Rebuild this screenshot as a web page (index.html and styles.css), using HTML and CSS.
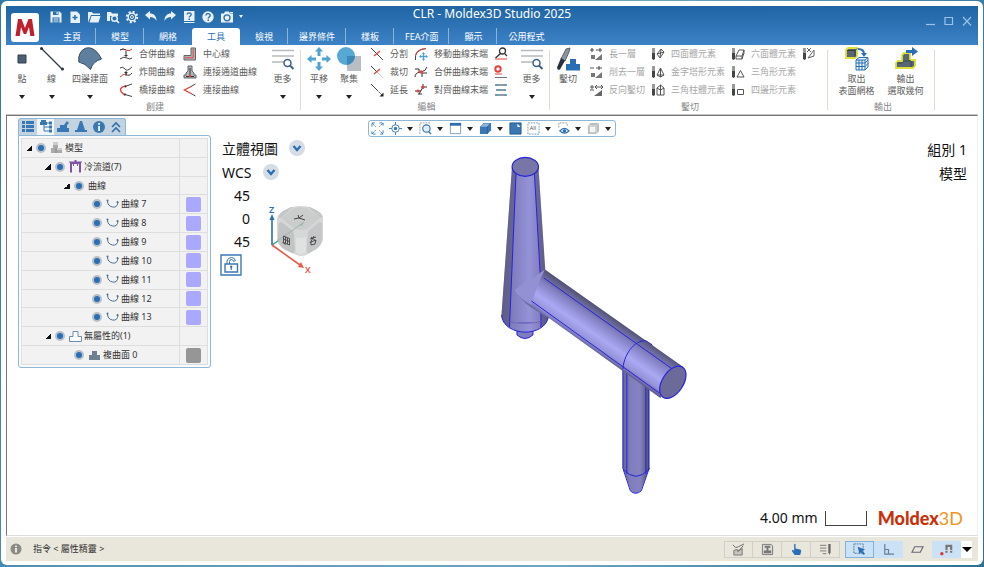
FILE: index.html
```html
<!DOCTYPE html>
<html lang="zh-Hant">
<head>
<meta charset="utf-8">
<title>CLR - Moldex3D Studio 2025</title>
<link rel="stylesheet" href="styles.css">
</head>
<body>
<div class="window">

<header class="titlebar">
  <button class="logo" aria-label="Moldex3D"><svg viewBox="0 0 28 29" width="28" height="29"><path d="M4.500 23L7 6h3.500L14 15l3.500-9H21l2.500 17h-4.200l-1.300-9-2.800 7h-2.400L10 14l-1.300 9z" fill="#c0202c"/></svg></button>
  <div class="titlemain">
    <div class="titlerow">
      <div class="quick">
        <button aria-label="儲存"><svg viewBox="0 0 14 14"><path d="M1.500 1.500h9l2 2v9h-11z" fill="#e8f1fa"/><path d="M4 1.500h5.500V5H4zM3.500 7.500h7v5h-7z" fill="#2b6fae"/><path d="M7.500 2h1.200v2.200H7.500zM4.500 8.500h5v1h-5zM4.500 10.500h5v1h-5z" fill="#e8f1fa"/></svg></button>
        <button aria-label="新增"><svg viewBox="0 0 14 14"><path d="M2.500 1.500h6.500l3 3v8.500h-9.500z" fill="#e8f1fa"/><path d="M7 5v5M4.500 7.500h5" stroke="#2b6fae" stroke-width="1.500"/></svg></button>
        <button aria-label="開啟"><svg viewBox="0 0 14 14"><path d="M1 12.500V2h4l1 1.500h7V5H4z" fill="#e8f1fa"/><path d="M4.500 6H13.500l-2 6.500H2.500z" fill="#e8f1fa"/></svg></button>
        <button aria-label="瀏覽"><svg viewBox="0 0 14 14"><path d="M1 11V2h4l1 1.500h6V6H4v5z" fill="#e8f1fa"/><circle cx="8.500" cy="8.500" r="2.800" fill="#2b6fae" stroke="#e8f1fa" stroke-width="1.400"/><path d="M10.500 10.500l2.500 2.500" stroke="#e8f1fa" stroke-width="1.600"/></svg></button>
        <button aria-label="設定"><svg viewBox="0 0 14 14"><circle cx="7" cy="7" r="5.200" fill="none" stroke="#e8f1fa" stroke-width="2" stroke-dasharray="2.040 2.040"/><circle cx="7" cy="7" r="3.800" fill="none" stroke="#e8f1fa" stroke-width="1.400"/><circle cx="7" cy="7" r="1.500" fill="none" stroke="#e8f1fa"/></svg></button>
        <button aria-label="復原"><svg viewBox="0 0 14 14"><path d="M1 5l5-4v2.500c4 0 6.500 2.500 6.500 7.500C11 8 9 7 6 7v2.500z" fill="#e8f1fa"/></svg></button>
        <button aria-label="重做"><svg viewBox="0 0 14 14"><path d="M13 5L8 1v2.500C4 3.500 1.500 6 1.500 11 3 8 5 7 8 7v2.500z" fill="#e8f1fa"/></svg></button>
        <button aria-label="說明文件"><svg viewBox="0 0 14 14"><path d="M2 1h10.500v10H2zM2 12h10.500v1H2z" fill="#e8f1fa"/><path d="M5.200 4.600c0-2.400 4-2.400 4 0 0 1.400-2 1.400-2 3" fill="none" stroke="#2b6fae" stroke-width="1.300"/><path d="M6.500 8.500H8V10H6.500z" fill="#2b6fae"/></svg></button>
        <button aria-label="說明"><svg viewBox="0 0 14 14"><circle cx="7" cy="7" r="5.700" fill="#e8f1fa"/><path d="M5 5.600c0-2.800 4.200-2.600 4.200 0C9.200 7 7.200 7 7.200 8.600" fill="none" stroke="#2b6fae" stroke-width="1.400"/><path d="M6.500 9.500H8V11H6.500z" fill="#2b6fae"/></svg></button>
        <button aria-label="擷取畫面"><svg viewBox="0 0 14 14"><path d="M1 3.500h3l1-2h4l1 2h3v9H1z" fill="#e8f1fa"/><circle cx="7" cy="7.800" r="3" fill="none" stroke="#2b6fae" stroke-width="1.300"/><path d="M10 2.500h3" stroke="#e8f1fa"/></svg></button>
        <button class="tiny" aria-label="更多命令"><i class="caret light"></i></button>
      </div>
      <h1>CLR - Moldex3D Studio 2025</h1>
      <div class="winbtns">
        <button aria-label="最小化"><svg viewBox="0 0 10 10"><path d="M0 8.500h9" stroke="#9cc3e6" stroke-width="1.200"/></svg></button>
        <button aria-label="最大化"><svg viewBox="0 0 10 10"><path d="M1 1.500h7.500v7H1z" fill="none" stroke="#9cc3e6" stroke-width="1.200"/></svg></button>
        <button aria-label="關閉"><svg viewBox="0 0 10 10"><path d="M1 1l8 8.500M9 1L1 9.500" stroke="#9cc3e6" stroke-width="1.200"/></svg></button>
      </div>
    </div>
    <nav class="tabs">
      <button>主頁</button><button>模型</button><button class="plain">網格</button><button class="plain active">工具</button><button>檢視</button><button>邊界條件</button><button>樣板</button><button>FEA介面</button><button>顯示</button><button class="plain">公用程式</button>
    </nav>
  </div>
</header>

<section class="ribbon">
  <div class="group create">
    <div class="tools">
      <div class="bigs">
        <button class="big"><svg viewBox="0 0 24 24"><path d="M8 8h8v8H8z" fill="#4d5f73" stroke="#333f4c"/></svg><span>點</span><i class="caret"></i></button>
        <button class="big wide"><svg viewBox="0 0 24 24"><path d="M1.500 1.500l21 21" stroke="#2f3c49" stroke-width="1.300"/><circle cx="1.500" cy="1.500" r="1.500" fill="#26323e"/><circle cx="22.500" cy="22" r="1.500" fill="#26323e"/></svg><span>線</span><i class="caret"></i></button>
        <button class="big quad"><svg viewBox="0 0 24 24"><path d="M.8 10Q3 1 10.500.7 18 1 23.500 12 15 14 12.500 22.500 7 16 .8 15z" fill="#5f7f9e" stroke="#34495e"/></svg><span>四邊建面</span><i class="caret"></i></button>
      </div>
      <div class="col">
        <button class="item"><svg viewBox="0 0 14 14"><path d="M1 3q3-2 6 0t6-1" stroke="#e8403a"/><path d="M1 3q3-2 6 0M1 12q4-3 7-1t5 0" stroke="#444"/><path d="M7 4v5" stroke="#333"/><path d="M5 8h4L7 10z" fill="#333" stroke="none"/></svg>合併曲線</button>
        <button class="item"><svg viewBox="0 0 14 14"><path d="M1 3q3-2 5 1 2 3 7-2" stroke="#444"/><path d="M1 12q3-3 6-3" stroke="#e8403a"/><path d="M7 9q3 3 6-1M7 6v5" stroke="#333"/><path d="M5 7h4L7 9z" fill="#333" stroke="none"/></svg>炸開曲線</button>
        <button class="item"><svg viewBox="0 0 14 14"><path d="M7 3Q1 4 1.500 7T6 12" stroke="#e8403a" stroke-width="1.400"/><path d="M6 3.500L13 1M6 11.500l7 2" stroke="#444"/><circle cx="6.500" cy="3.500" r="1" fill="#333"/><circle cx="6" cy="11.500" r="1" fill="#333"/></svg>橋接曲線</button>
      </div>
      <div class="col">
        <button class="item"><svg viewBox="0 0 14 14"><path d="M8 1h4.500v12H1V8.500h7z" fill="#b3b6b9" stroke="#60666c"/><path d="M10.200 2v8.800H2" stroke="#e8403a"/></svg>中心線</button>
        <button class="item"><svg viewBox="0 0 14 14"><path d="M5 1h4v5l2 2v2h2v3H1v-3h2V8l2-2z" fill="#b3b6b9" stroke="#60666c"/><path d="M7 3v8M3 11.500h8" stroke="#333"/><circle cx="7" cy="11" r="1.200" fill="#e8403a" stroke="none"/></svg>連接通道曲線</button>
        <button class="item"><svg viewBox="0 0 14 14"><path d="M8 3.500L1.500 7 8 10.500" stroke="#e8403a" stroke-width="1.400"/><path d="M8 3.500L12.500 1M8 10.500l4.500 2.500" stroke="#444"/></svg>連接曲線</button>
      </div>
      <button class="big wide more"><svg viewBox="0 0 24 24"><path d="M1 3.500h22M1 9h22M1 15h12" stroke="#b5babf" stroke-width="1.500"/><circle cx="16.500" cy="16" r="3.500" fill="#fff" stroke="#3f5f80" stroke-width="1.500"/><path d="M19 18.500l3.500 3.500" stroke="#3f5f80" stroke-width="2"/></svg><span>更多</span><i class="caret"></i></button>
    </div>
    <h2>創建</h2>
  </div>

  <div class="group edit">
    <div class="tools">
      <div class="bigs">
        <button class="big"><svg viewBox="0 0 24 24"><path d="M12 0l4 4.500h-2.500V9h-3V4.500H8zM12 24l4-4.500h-2.500V15h-3v4.500H8zM0 12l4.500-4v2.500H9v3H4.500V16zM24 12l-4.500-4v2.500H15v3h4.500V16z" fill="#4fa3d1"/></svg><span>平移</span><i class="caret"></i></button>
        <button class="big"><svg viewBox="0 0 24 24"><path d="M10 9h14v15H10z" fill="#b9bec4"/><circle cx="9" cy="9" r="9" fill="#57a9d5"/><path d="M10 9h8a9 9 0 0 1-8 9z" fill="#3c88ba"/></svg><span>聚集</span><i class="caret"></i></button>
      </div>
      <div class="col">
        <button class="item"><svg viewBox="0 0 14 14"><path d="M1 1l12 12" stroke="#444"/><path d="M4 9l6-5" stroke="#e8403a" stroke-width="1.300"/></svg>分割</button>
        <button class="item"><svg viewBox="0 0 14 14"><path d="M1 1l6 6" stroke="#444"/><path d="M7 7l6 6" stroke="#ccc"/><path d="M4 9l6-5" stroke="#e8403a" stroke-width="1.300"/></svg>裁切</button>
        <button class="item"><svg viewBox="0 0 14 14"><path d="M1 1l6 6" stroke="#444"/><path d="M7 7l5 5" stroke="#444" stroke-dasharray="2 1"/><path d="M13.500 13.500h-4l4-4z" fill="#222" stroke="none"/></svg>延長</button>
      </div>
      <div class="col">
        <button class="item"><svg viewBox="0 0 14 14"><path d="M1.500 13Q0 3 12 1.500" stroke="#444"/><path d="M1.500 8Q3 2 12 1.500" stroke="#e8403a"/><path d="M9.500 6v7M6 9.500h7" stroke="#4fa3d1" stroke-width="1.300"/><path d="M8 7l1.500-2L11 7zM8 12l1.500 2 1.500-2zM7 8l-2 1.500L7 11zM12 8l2 1.500-2 1.500z" fill="#4fa3d1" stroke="none"/></svg>移動曲線末端</button>
        <button class="item"><svg viewBox="0 0 14 14"><path d="M1 12q0-4 5-5M13 2q-1 4-6 5M1 4h4v3M8 12V8h5" stroke="#333"/><circle cx="7" cy="7" r="1.700" fill="#e8403a" stroke="none"/></svg>合併曲線末端</button>
        <button class="item"><svg viewBox="0 0 14 14"><path d="M1 8h6M7 4h6M4 11h4M9 4l-4 7M9 1v5" stroke="#333"/><circle cx="9" cy="4" r="1.500" fill="#e8403a" stroke="none"/><circle cx="4" cy="8" r="1.500" fill="#e8403a" stroke="none"/></svg>對齊曲線末端</button>
      </div>
      <div class="col">
        <button class="item" aria-label="檢查曲線"><svg viewBox="0 0 14 14"><path d="M1 12h12" stroke="#e8403a"/><circle cx="8.500" cy="4" r="3" stroke="#333" stroke-width="1.300"/><path d="M6.500 6.500L1.500 11M11 7l2 2" stroke="#333" stroke-width="1.300"/></svg></button>
        <button class="item" aria-label="移除曲線"><svg viewBox="0 0 14 14"><circle cx="4" cy="4" r="2.700" stroke="#e8403a" stroke-width="2"/><path d="M1 9h7" stroke="#e8403a"/><path d="M1 12.500h12" stroke="#777"/></svg></button>
        <button class="item" aria-label="排列曲線"><svg viewBox="0 0 14 14"><path d="M1 2h12M2 7h10M1 12h12" stroke="#333"/><path d="M3 1v2M11 1v2M5 6v2M11 6v2M3 11v2M11 11v2" stroke="#4fa3d1" stroke-width="2"/></svg></button>
      </div>
      <button class="big wide more"><svg viewBox="0 0 24 24"><path d="M1 3.500h22M1 9h22M1 15h12" stroke="#b5babf" stroke-width="1.500"/><circle cx="16.500" cy="16" r="3.500" fill="#fff" stroke="#3f5f80" stroke-width="1.500"/><path d="M19 18.500l3.500 3.500" stroke="#3f5f80" stroke-width="2"/></svg><span>更多</span><i class="caret"></i></button>
    </div>
    <h2>編輯</h2>
  </div>

  <div class="group chisel">
    <div class="tools">
      <div class="bigs">
        <button class="big"><svg viewBox="0 0 24 24"><path d="M10 2l4-1-1 4-4 9-4-2z" fill="#8c959d" stroke="#59636c"/><path d="M5 11l4 2.500-5 9q-3 1-3-2z" fill="#26323e"/><path d="M10 23.500V17h4v-5h6v5h4v6.500z" fill="#2a6fb5"/></svg><span>鑿切</span></button>
      </div>
      <div class="col off">
        <button class="item"><svg viewBox="0 0 14 14"><path d="M1 3h4M3 1v4M7 3h6M11 1v4" stroke="#555" stroke-width="1.200"/><path d="M6 13l7-6v6zM2 8h4v4H2z" fill="#777" stroke="none"/></svg>長一層</button>
        <button class="item"><svg viewBox="0 0 14 14"><path d="M1 3h4M7 3h6M10 1v4" stroke="#555" stroke-width="1.200"/><path d="M6 13l7-6v6zM2 8h4v4H2z" fill="#777" stroke="none"/></svg>削去一層</button>
        <button class="item"><svg viewBox="0 0 14 14"><path d="M1 4h4M3 2v4M1 7h4M7 4h6M8 2l-2 2 2 2M12 2l2 2-2 2" stroke="#555"/><path d="M5 13l8-6v6z" fill="#666" stroke="none"/></svg>反向鑿切</button>
      </div>
      <div class="col off">
        <button class="item"><svg viewBox="0 0 14 14"><path d="M1 1h3v5H1z" fill="#999" stroke="none"/><path d="M1 6h3v6l-1.500 1L1 12z" fill="#444" stroke="none"/><path d="M6 7l4-5 3 3-4 6zM6 7l7-2M9 11l1-9" stroke="#555"/></svg>四面體元素</button>
        <button class="item"><svg viewBox="0 0 14 14"><path d="M1 1h3v5H1z" fill="#999" stroke="none"/><path d="M1 6h3v6l-1.500 1L1 12z" fill="#444" stroke="none"/><path d="M9.500 3L6 10l3.500 2 3.500-2zM9.500 3v9M6 10h7" stroke="#555"/></svg>金字塔形元素</button>
        <button class="item"><svg viewBox="0 0 14 14"><path d="M1 1h3v5H1z" fill="#999" stroke="none"/><path d="M1 6h3v6l-1.500 1L1 12z" fill="#444" stroke="none"/><path d="M6 5l3.500-3L13 5v7H6zM9.500 2v10M6 5l3.500 2L13 5" stroke="#555"/></svg>三角柱體元素</button>
      </div>
      <div class="col off">
        <button class="item"><svg viewBox="0 0 14 14"><path d="M1 1h3v5H1z" fill="#999" stroke="none"/><path d="M1 6h3v6l-1.500 1L1 12z" fill="#444" stroke="none"/><path d="M5 9l3-6h5l-2 6zM5 9v3h6l2-6V3M11 9v3" stroke="#555"/></svg>六面體元素</button>
        <button class="item"><svg viewBox="0 0 14 14"><path d="M1 1h3v5H1z" fill="#999" stroke="none"/><path d="M1 6h3v6l-1.500 1L1 12z" fill="#444" stroke="none"/><path d="M9.500 5.500L6 12h7z" stroke="#555"/></svg>三角形元素</button>
        <button class="item"><svg viewBox="0 0 14 14"><path d="M1 1h3v5H1z" fill="#999" stroke="none"/><path d="M1 6h3v6l-1.500 1L1 12z" fill="#444" stroke="none"/><path d="M6.500 6.500h6v5h-6z" stroke="#555"/></svg>四邊形元素</button>
      </div>
      <div class="col off">
        <button class="item" aria-label="刪除元素"><svg viewBox="0 0 14 14"><path d="M1 1h3v5H1z" fill="#999" stroke="none"/><path d="M1 6h3v6l-1.500 1L1 12z" fill="#444" stroke="none"/><path d="M5 1l4 4M9 1L5 5M6 11l6-8v6z" stroke="#666"/></svg></button>
      </div>
    </div>
    <h2>鑿切</h2>
  </div>

  <div class="group export">
    <div class="tools">
      <button class="big"><svg viewBox="0 0 24 24"><path d="M1 3l2-2h9v8l-2 2H1z" fill="#596674" stroke="#dde03a" stroke-width="1.800"/><path d="M2 3.500h8V10M10 3.500L12 1.500" fill="none" stroke="#2f3b46"/><path d="M13 2q6 0 6 5" fill="none" stroke="#2a6fb5" stroke-width="2"/><path d="M16 6h6l-3 4z" fill="#2a6fb5"/><path d="M11 13l3-2.500h9V20l-3 3h-9zM11 13h9v10M20 13l3-2.500M14 13v10M17 13v10M11 16h9l3-3M11 19.500h9l3-3" fill="#e9f2fa" stroke="#2a6fb5"/></svg><span>取出<br>表面網格</span></button>
      <button class="big"><svg viewBox="0 0 24 24"><path d="M2 21v-5l2-2h4V8l2-2h6v6l1 1h4v6l-2 2z" fill="#596674" stroke="#dde03a" stroke-width="1.800"/><path d="M3 16h5l2-2h7v6" fill="none" stroke="#3b4854"/><path d="M12 3h6V0l6 4.500L18 9V6h-6z" fill="#2a6fb5"/></svg><span>輸出<br>選取幾何</span></button>
    </div>
    <h2>輸出</h2>
  </div>
</section>

<main class="viewport">
  <svg class="scene" viewBox="7 116 971 419" role="img" aria-label="流道模型">
    <defs>
      <linearGradient id="sprue" x1="502" x2="549" y1="0" y2="0" gradientUnits="userSpaceOnUse"><stop offset="0" stop-color="#6f6da8"/><stop offset=".25" stop-color="#807ebe"/><stop offset=".6" stop-color="#9593d8"/><stop offset=".8" stop-color="#8381c2"/><stop offset="1" stop-color="#66658c"/></linearGradient>
      <linearGradient id="runner" x1="617" y1="320" x2="595" y2="352" gradientUnits="userSpaceOnUse"><stop offset="0" stop-color="#545376"/><stop offset=".3" stop-color="#8583c6"/><stop offset=".62" stop-color="#aba9f3"/><stop offset=".85" stop-color="#9492d8"/><stop offset="1" stop-color="#5d5b8e"/></linearGradient>
      <linearGradient id="drop" x1="623" x2="650" y1="0" y2="0" gradientUnits="userSpaceOnUse"><stop offset="0" stop-color="#65648f"/><stop offset=".3" stop-color="#7f7dbb"/><stop offset=".65" stop-color="#8583c2"/><stop offset="1" stop-color="#51506c"/></linearGradient>
    </defs>
    <path d="M517.500 328v7q8 7 16 0v-7z" fill="#7f7dbb" stroke="#2523dd"/>
    <path d="M512.500 167L502 315c2 22 43 23 47 2L539 167z" fill="url(#sprue)"/>
    <path d="M512.500 167L502 315q1 8 8 12l6.500-153zM539 167l6.500 103-4.500 8-6-103zM541.500 305l7 5 .5 7q-2 8-7.500 10z" fill="#4d4c68" opacity=".5"/>
    <path d="M502 315c2 22 43 23 47 2M516.500 174L510 327M535 174l6 104M541.500 310v17" fill="none" stroke="#2523dd"/>
    <path d="M503 320q22 7 45 0M519 322.500h14" fill="none" stroke="#5b59b0" stroke-width=".6"/>
    <ellipse cx="525.800" cy="166.700" rx="13.200" ry="9.500" fill="#7776a6" stroke="#2523dd" stroke-width="1.200"/>
    <path d="M623.500 360v108l8 23q5 5 10 0l8.500-23V370z" fill="url(#drop)"/>
    <path d="M623.500 368v101q13 15 26.500 0M627.500 370v104M646.500 383v91M624 470l7 21q5 5 11 0l8-23M649.500 390v80" fill="none" stroke="#2523dd"/>
    <path d="M515.500 290L545.500 269.500 684 367 661 398 548 317Q522 304 515.500 290z" fill="url(#runner)"/>
    <path d="M515.500 290l30-20.500Q537 286 532 305 519 298 515.500 290z" fill="#9391d4"/>
    <path d="M544.500 278L673 369M532 301l128 92M647 341c-9-2-22 10-23.500 28M647 341l6 4" fill="none" stroke="#2523dd"/>
    <ellipse cx="673.500" cy="382.300" rx="18" ry="10.500" transform="rotate(-57 673.500 382.300)" fill="#6b6a99" stroke="#2523dd" stroke-width="1.200"/>
  </svg>

  <div class="left">
    <aside class="panel">
      <div class="paneltabs">
        <button aria-label="清單"><svg viewBox="0 0 14 14"><path d="M1 1h3v3H1zM5 1h8v3H5zM1 5h3v3H1zM5 5h8v3H5zM1 9h3v3H1zM5 9h8v3H5z" fill="#3a78b5"/></svg></button>
        <button class="on" aria-label="模型樹"><svg viewBox="0 0 14 14"><path d="M2 0h5v2h1v3H1V2h1zM10 1.500h3v3h-3zM10 5.500h3v3h-3zM10 9.500h3v3h-3z" fill="#3a78b5"/><path d="M5 5v6h5M5 7h5M8 3h2" fill="none" stroke="#3a78b5"/></svg></button>
        <button aria-label="幾何"><svg viewBox="0 0 14 14"><path d="M1 12V8h3V5h4l3-4 2 2-2 2v3h2v4z" fill="#3a78b5"/></svg></button>
        <button aria-label="邊界"><svg viewBox="0 0 14 14"><path d="M6 1h2l3 9h2v2H1v-2h2z" fill="#3a78b5"/></svg></button>
        <button aria-label="資訊"><svg viewBox="0 0 14 14"><circle cx="7" cy="7" r="6" fill="#3a78b5"/><path d="M6.200 3h1.700v1.700H6.200zM6.200 6h1.700v5H6.200z" fill="#fff"/></svg></button>
        <button aria-label="收合"><svg viewBox="0 0 14 14"><path d="M3 7l4-4 4 4M3 12l4-4 4 4" fill="none" stroke="#2f6fae" stroke-width="1.600"/></svg></button>
      </div>
      <div class="panelbody">
        <table>
          <tr><td><div class="node"><button class="fold" aria-label="收合"></button><input type="checkbox" id="n0" checked><label for="n0"><svg viewBox="0 0 13 13"><path d="M3 1h5v6h4v5H1V7h2z" fill="#aaa"/><path d="M3 1h5v3H3zM7 7h5v2H7z" fill="#ccc"/><path d="M6 7v5" stroke="#888"/></svg>模型</label></div></td><td></td></tr>
          <tr><td><div class="node l1"><button class="fold" aria-label="收合"></button><input type="checkbox" id="n1" checked><label for="n1"><svg viewBox="0 0 13 13"><path d="M2 12.500V3h9v9.500M6.500 0v3" fill="none" stroke="#8052a8" stroke-width="2"/><path d="M0 2h13M4.500 3v3M8.500 3v3" stroke="#8052a8"/></svg>冷流道(7)</label></div></td><td></td></tr>
          <tr><td><div class="node l2"><button class="fold" aria-label="收合"></button><input type="checkbox" id="n2" checked><label for="n2">曲線</label></div></td><td></td></tr>
          <tr><td><div class="node l3"><input type="checkbox" id="c7" checked><label for="c7"><svg viewBox="0 0 13 13"><path d="M1.500 3q0 5 5 6t5.500-5" fill="none" stroke="#4a6f94"/><circle cx="1.500" cy="2.500" r="1" fill="#4a6f94"/><circle cx="11.500" cy="4" r="1" fill="#4a6f94"/></svg>曲線 7</label></div></td><td><i class="swatch"></i></td></tr>
          <tr><td><div class="node l3"><input type="checkbox" id="c8" checked><label for="c8"><svg viewBox="0 0 13 13"><path d="M1.500 3q0 5 5 6t5.500-5" fill="none" stroke="#4a6f94"/><circle cx="1.500" cy="2.500" r="1" fill="#4a6f94"/><circle cx="11.500" cy="4" r="1" fill="#4a6f94"/></svg>曲線 8</label></div></td><td><i class="swatch"></i></td></tr>
          <tr><td><div class="node l3"><input type="checkbox" id="c9" checked><label for="c9"><svg viewBox="0 0 13 13"><path d="M1.500 3q0 5 5 6t5.500-5" fill="none" stroke="#4a6f94"/><circle cx="1.500" cy="2.500" r="1" fill="#4a6f94"/><circle cx="11.500" cy="4" r="1" fill="#4a6f94"/></svg>曲線 9</label></div></td><td><i class="swatch"></i></td></tr>
          <tr><td><div class="node l3"><input type="checkbox" id="c10" checked><label for="c10"><svg viewBox="0 0 13 13"><path d="M1.500 3q0 5 5 6t5.500-5" fill="none" stroke="#4a6f94"/><circle cx="1.500" cy="2.500" r="1" fill="#4a6f94"/><circle cx="11.500" cy="4" r="1" fill="#4a6f94"/></svg>曲線 10</label></div></td><td><i class="swatch"></i></td></tr>
          <tr><td><div class="node l3"><input type="checkbox" id="c11" checked><label for="c11"><svg viewBox="0 0 13 13"><path d="M1.500 3q0 5 5 6t5.500-5" fill="none" stroke="#4a6f94"/><circle cx="1.500" cy="2.500" r="1" fill="#4a6f94"/><circle cx="11.500" cy="4" r="1" fill="#4a6f94"/></svg>曲線 11</label></div></td><td><i class="swatch"></i></td></tr>
          <tr><td><div class="node l3"><input type="checkbox" id="c12" checked><label for="c12"><svg viewBox="0 0 13 13"><path d="M1.500 3q0 5 5 6t5.500-5" fill="none" stroke="#4a6f94"/><circle cx="1.500" cy="2.500" r="1" fill="#4a6f94"/><circle cx="11.500" cy="4" r="1" fill="#4a6f94"/></svg>曲線 12</label></div></td><td><i class="swatch"></i></td></tr>
          <tr><td><div class="node l3"><input type="checkbox" id="c13" checked><label for="c13"><svg viewBox="0 0 13 13"><path d="M1.500 3q0 5 5 6t5.500-5" fill="none" stroke="#4a6f94"/><circle cx="1.500" cy="2.500" r="1" fill="#4a6f94"/><circle cx="11.500" cy="4" r="1" fill="#4a6f94"/></svg>曲線 13</label></div></td><td><i class="swatch"></i></td></tr>
          <tr><td><div class="node l1"><button class="fold" aria-label="收合"></button><input type="checkbox" id="n3" checked><label for="n3"><svg viewBox="0 0 13 13"><path d="M4 1.500h5v5h3.500v5H.5v-5H4z" fill="#fff" stroke="#6a8db0"/></svg>無屬性的(1)</label></div></td><td></td></tr>
          <tr><td><div class="node l2 leaf"><input type="checkbox" id="n4" checked><label for="n4"><svg viewBox="0 0 13 13"><path d="M4 2h5v4h3v5H1V6h3z" fill="#6f8191"/></svg>複曲面 0</label></div></td><td><i class="swatch gray"></i></td></tr>
        </table>
      </div>
    </aside>

    <div class="viewinfo">
      <div class="line">立體視圖<button class="round" aria-label="選擇視圖"><svg viewBox="0 0 16 16"><path d="M4.500 6L8 10l3.500-4" fill="none" stroke="#2a6fb5" stroke-width="2.400"/></svg></button></div>
      <div class="line wcs">WCS<button class="round" aria-label="選擇座標系"><svg viewBox="0 0 16 16"><path d="M4.500 6L8 10l3.500-4" fill="none" stroke="#2a6fb5" stroke-width="2.400"/></svg></button></div>
      <div class="orient">
        <div class="angles"><span>45</span><span>0</span><span>45</span>
          <button class="lock" aria-label="鎖定視角"><svg viewBox="0 0 22 22"><path d="M1 1h20v20H1z" fill="#fff" stroke="#3a78b5" stroke-width="1.400"/><path d="M5 10h12.500v8H5z" fill="none" stroke="#3a78b5" stroke-width="1.400"/><path d="M7 10V7q1-3.500 4.500-3.500 3 0 4 3l-2 1q-.5-2-2-2-2 0-2 2V10" fill="none" stroke="#3a78b5"/><circle cx="11.200" cy="12.800" r="1.200" fill="#3a78b5"/><path d="M11.200 13v3" stroke="#3a78b5" stroke-width="1.200"/></svg></button>
        </div>
        <svg class="cube" viewBox="264 203 64 72">
          <path d="M293 206.700q7-1.500 15 0l9 4q5 2 6 7v22q-2 7-8 10l-9 5.500q-5 1.500-9 0L285 250q-6-3-8-10v-22q2-5 7.300-7.300z" fill="#d6d7d7"/>
          <path d="M281.500 218.300L294 208q7-1.500 13 0l13 10.300-13 11q-6 1.500-12 0z" fill="#cbcccc"/>
          <path d="M278.500 223l3-1 12 9.500 1.500 20-2 2-8-4q-5-3-7-9z" fill="#c2c3c4"/><path d="M322 223l-3-1-11 9.500-1.500 20 2 2 7-4q5-3 6.500-9z" fill="#c6c7c8"/>
          <path d="M281 218l12-11h-2l-8 4q-4 3-5 6zM320 218l-12-11h2l8 4q4 3 5 6z" fill="#c6c7c8"/>
          <path d="M296 237q5 2 10 0v15l-5 3-5-3z" fill="#e0e1e1"/>
          <path d="M272 245l32-23" stroke="#8bb5a6" stroke-width=".8"/><path d="M272 245l6-4" stroke="#3aa884" stroke-width="1.400"/><path d="M299 225l5-3-2 4z" fill="#9bb9ae"/>
          <path d="M294 219l5-1 4-3M299 218l6 2M299 218l-1-3" stroke="#444" fill="none"/>
          <path d="M283.500 236l6 2.500v6.500M283.500 236v6.500l6 2.500M285.500 237v6M287.500 238v6M283.500 239l6 2.500M282.500 242.500l3 2" stroke="#444" stroke-width=".9" fill="none"/>
          <path d="M310 239l6-2M311 242l5-2-1 4-4 1zM314 236l-4 7M311 237l5 4" stroke="#444" stroke-width=".9" fill="none"/>
          <path d="M272 245v-27" stroke="#2a6fb5" stroke-width="1.600"/><path d="M269.500 220l2.500-6 2.500 6z" fill="#2a6fb5"/>
          <path d="M272 245l28 20" stroke="#ec5a48" stroke-width="1.600"/><path d="M304 268l-6-1 3-5z" fill="#ec5a48"/>
          <text x="269" y="213" fill="#2a6fb5">Z</text><text x="305" y="273" fill="#ec5a48">X</text>
        </svg>
      </div>
    </div>
  </div>

  <div class="viewbar">
    <button class="solo" aria-label="全部顯示"><svg viewBox="0 0 14 14"><path d="M1 5V1h4M9 1h4v4M13 9v4H9M5 13H1V9M1 1l4 4M13 1L9 5M13 13L9 9M1 13l4-4" fill="none" stroke="#3a78b5" stroke-dasharray="3 1"/></svg></button>
    <button aria-label="中心"><svg viewBox="0 0 14 14"><circle cx="7" cy="7" r="4" fill="none" stroke="#3a78b5"/><circle cx="7" cy="7" r="1.800" fill="#3a78b5"/><path d="M7 0v3M7 11v3M0 7h3M11 7h3" stroke="#3a78b5"/></svg><i class="caret"></i></button>
    <button aria-label="縮放"><svg viewBox="0 0 14 14"><path d="M1 13V1h12" fill="none" stroke="#999" stroke-dasharray="2 1"/><circle cx="8" cy="7" r="4" fill="#e4eef7" stroke="#3a78b5" stroke-width="1.300"/><path d="M10.500 10.500L13 13" stroke="#3a78b5" stroke-width="1.600"/></svg><i class="caret"></i></button>
    <button aria-label="視窗"><svg viewBox="0 0 14 14"><path d="M1.500 1.500h11v11h-11z" fill="#fff" stroke="#7c9fc2"/><path d="M1 1h12v3H1z" fill="#2a6fb5"/></svg><i class="caret"></i></button>
    <button aria-label="著色"><svg viewBox="0 0 14 14"><path d="M1 5l4-4h8v8l-4 4H1z" fill="#3a78b5"/><path d="M1.500 5L5 1.500h7.500L9 5z" fill="#8fb4da"/><path d="M9 5v8M9 5l3.500-3.500" stroke="#245a94" stroke-width=".8"/></svg><i class="caret"></i></button>
    <button class="solo" aria-label="背景"><svg viewBox="0 0 14 14"><path d="M1 1h12v12H1z" fill="#3a78b5" stroke="#24598f"/><path d="M9 2l3.500 3.500H9z" fill="#fff"/></svg></button>
    <button aria-label="選取全部"><svg viewBox="0 0 14 14"><path d="M1 1h12v12H1z" fill="none" stroke="#6d9cc8" stroke-dasharray="2 1"/><text x="3" y="9" fill="#555">All</text></svg><i class="caret"></i></button>
    <button aria-label="顯示與隱藏"><svg viewBox="0 0 14 14"><path d="M2 6V1h9v3" fill="none" stroke="#999" stroke-dasharray="2 1"/><path d="M3 9.500q5-5 10 0-5 5-10 0z" fill="#dce8f3" stroke="#2a6fb5" stroke-width="1.300"/><circle cx="8" cy="9.500" r="1.800" fill="#2a6fb5"/></svg><i class="caret"></i></button>
    <button aria-label="透明"><svg viewBox="0 0 14 14"><path d="M1 4l3-3h9v9l-3 3H1z" fill="#b9bfc0"/><path d="M3 5h6v6H3z" fill="#f4f5f5"/><path d="M10 4l3-3M1 4h9v9" stroke="#d5d9da" fill="none"/></svg><i class="caret"></i></button>
  </div>

  <div class="right">
    <div class="caption"><p>組別 1</p><p>模型</p></div>
    <div class="scale"><span>4.00 mm</span><i class="ruler"></i><strong class="brand">Moldex<em>3D</em></strong></div>
  </div>
</main>

<footer class="status">
  <svg class="info" viewBox="0 0 12 12"><circle cx="6" cy="6" r="5.500" fill="#8b8a84"/><path d="M5.200 2.500h1.600v1.600H5.200zM5.200 5h1.600v4.500H5.200z" fill="#fff"/></svg>
  <span class="cmd">指令 &lt; 屬性精靈 &gt;</span>
  <div class="sgroup box">
    <button aria-label="網格品質"><svg viewBox="0 0 14 14"><path d="M2 13V8l3-1 2 1 4-2v7z" fill="#c4c3bb" stroke="#777"/><path d="M1 2l3 3 3-1 6-3M12 3L7 9 5 8" fill="none" stroke="#666"/></svg></button>
    <button aria-label="儲存設定"><svg viewBox="0 0 14 14"><path d="M1.500 1.500h9.500l1.500 1.500v9.500h-11z" fill="#deddd5" stroke="#777"/><path d="M4 3h6v2H8v3h3v3H3V8h3V5H4z" fill="#777"/></svg></button>
    <button aria-label="觸控"><svg viewBox="0 0 14 14"><path d="M4.500 1q1.500-.5 1.500 1v4l5 1q1.500.5 1 2l-1 4H5L2 8.500Q2 7 4.500 8z" fill="#2a6fb5"/></svg></button>
    <button aria-label="記錄"><svg viewBox="0 0 14 14"><path d="M1 2.500h7M1 5.500h7M1 8.500h7M4 11.500h4" stroke="#777"/><path d="M10 1h2.500v9L11.200 13 10 10z" fill="#666"/></svg></button>
  </div>
  <div class="sgroup">
    <button class="sel framed" aria-label="選取"><svg viewBox="0 0 14 14"><path d="M1 1h10v10H1z" fill="none" stroke="#4a6f94" stroke-dasharray="2 1"/><path d="M5 4l8 3-3 1.500 3 3-1.500 1.500-3-3L7 12z" fill="#2a6fb5"/></svg></button>
    <button class="sel" aria-label="正交"><svg viewBox="0 0 14 14"><path d="M3 1v11h10M3 7h4v5" fill="none" stroke="#667f99" stroke-width="1.300"/></svg></button>
    <button aria-label="平面"><svg viewBox="0 0 14 14"><path d="M4 4h9l-3 6H1z" fill="none" stroke="#667" stroke-width="1.200"/></svg></button>
    <button class="sel" aria-label="鎖點"><svg viewBox="0 0 14 14"><path d="M7 10.500V3h5v7.500" fill="none" stroke="#777" stroke-width="2.400"/><path d="M5.500 8h3M10.500 8h3" stroke="#ddd"/><circle cx="2" cy="11.500" r="1.800" fill="#e03030"/></svg></button>
    <button class="drop" aria-label="鎖點選項"><i class="caret large"></i></button>
  </div>
</footer>

</div>
</body>
</html>
```
FILE: styles.css
```css
* { box-sizing: border-box; }

body {
  margin: 0;
  background: linear-gradient(100deg, #2d7ba3, #5b94b8 15%, #6fa5bd 60%, #2b7196);
  color: #333;
  font: 9px/12px "Noto Sans", "Noto Sans CJK TC", sans-serif;
}

button {
  margin: 0;
  padding: 0;
  border: 0;
  background: none;
  color: inherit;
  font: inherit;
}

h1, h2, p { margin: 0; font-weight: 400; }

.window {
  display: flex;
  flex-direction: column;
  min-height: calc(100vh - 3px);
  margin: 1px 1px 2px;
  padding: 5px 5px 4px;
  border-radius: 6px;
  background: #fff;
}

.caret {
  display: block;
  border: 3px solid transparent;
  border-top: 4px solid #222;
  border-bottom: 0;
}
.caret.light { border-width: 3px 2px 0; border-top-color: #e8f1fa; }
.caret.large { border-width: 5px 5px 0; border-top-color: #000; }

/* title bar */
.titlebar {
  display: flex;
  height: 39px;
  background: linear-gradient(#1f64a3, #3c82c6);
  color: #fff;
}
.logo {
  width: 28px;
  height: 29px;
  margin: 7px 3px 0 5px;
  border-radius: 3px;
  background: #fff;
}
.logo svg { display: block; }
.titlemain { flex: 1; }
.titlerow {
  display: grid;
  grid-template-columns: 1fr auto 1fr;
  height: 22px;
}
.quick { display: flex; align-items: center; height: 21px; padding-left: 4px; }
.quick button { display: flex; justify-content: center; width: 19px; }
.quick button.tiny { width: 9px; }
.quick svg { width: 14px; height: 14px; }
h1 { margin-right: 36px; font-size: 12px; line-height: 16px; }
.winbtns { display: flex; justify-content: flex-end; gap: 8px; padding: 8px 6px 0 0; }
.winbtns svg { display: block; width: 10px; height: 10px; }
.tabs { display: flex; padding-left: 6px; }
.tabs button { position: relative; min-width: 48px; height: 17px; padding: 0 11px; }
.tabs button:not(.plain)::after {
  content: "";
  position: absolute;
  top: 0;
  right: 0;
  width: 1px;
  height: 16px;
  background: #8fb3d5;
}
.tabs .active { border-radius: 3px 3px 0 0; background: #fff; color: #2a6fb5; }

/* ribbon */
.ribbon { display: flex; border-bottom: 1px solid #c8c8c8; color: #5c5c5c; }
.group { position: relative; padding: 0 1px 0 3px; }
.group.create, .group.export { padding-left: 4px; }
.group::after {
  content: "";
  position: absolute;
  top: 5px;
  right: 0;
  width: 1px;
  height: 60px;
  background: #dfddd2;
}
.tools { display: flex; gap: 6px; }
.create .tools { gap: 8px; }
.chisel .tools { padding-right: 11px; }
.export .tools { gap: 0; padding-right: 4px; }
.group h2 { color: #888; font-size: 9px; line-height: 15px; text-align: center; }
.bigs { display: flex; }
.big {
  display: flex;
  flex-direction: column;
  align-items: center;
  width: 30px;
  height: 54px;
  padding-top: 2px;
  white-space: nowrap;
}
.big svg { width: 24px; height: 24px; }
.big span { margin-top: 2px; }
.big .caret { margin-top: 10px; }
.big.wide { width: 35px; }
.create .big:first-child { width: 24px; }
.big.quad { width: 42px; }
.export .big { width: 49px; }
.item {
  display: flex;
  align-items: center;
  gap: 6px;
  height: 18px;
  white-space: nowrap;
}
.item svg { width: 14px; height: 14px; fill: none; }
.off { color: #a8a8a8; }

/* viewport */
.viewport {
  position: relative;
  display: grid;
  grid-template-columns: 1fr auto 1fr;
  flex: 1;
  border: 1px solid #777;
  border-color: #777 #eee #ddd #777;
}
.scene { position: absolute; inset: 0; width: 100%; height: 100%; }
.left, .viewbar, .right { position: relative; }
.left { display: flex; gap: 9px; padding: 2px 0 0 11px; }

.paneltabs {
  display: flex;
  width: 108px;
  height: 17px;
  border: 1px solid #8db8da;
  border-bottom: 0;
  border-radius: 3px 3px 0 0;
  background: #c3d3df;
}
.paneltabs button { display: flex; align-items: center; justify-content: center; width: 18px; }
.paneltabs .on { background: #f2f4f6; }
.paneltabs svg { width: 14px; height: 14px; }
.panelbody {
  width: 193px;
  padding: 2px;
  border: 1px solid #8db8da;
  border-radius: 0 3px 3px 3px;
  background: #fafafa;
}
table { width: 100%; height: 227px; border-collapse: collapse; background: #f2f2f2; }
td { height: 18px; padding: 0; border: 1px solid #dedede; }
td:last-child { width: 28px; }
.node { display: flex; align-items: center; gap: 4px; padding-left: 4px; }
.node.l1 { padding-left: 23px; }
.node.l2 { padding-left: 42px; }
.node.l3 { padding-left: 70px; }
.node.leaf { padding-left: 52px; }
.fold { width: 6px; height: 6px; background: linear-gradient(135deg, transparent 50%, #111 50%); }
.node input {
  appearance: none;
  width: 10px;
  height: 10px;
  margin: 0;
  border: 2px solid #b9c0c7;
  border-radius: 50%;
  background: #2a6fb5;
}
.node label { display: flex; align-items: center; gap: 2px; white-space: nowrap; }
.node svg { width: 13px; height: 13px; }
.swatch { display: block; width: 15px; height: 15px; margin: 0 auto; border-radius: 2px; background: #aaa9ff; }
.swatch.gray { background: #969696; }

.viewinfo { padding-top: 18px; color: #111; font-size: 14px; line-height: 23px; }
.line { display: flex; align-items: center; gap: 11px; height: 24px; padding-left: 2px; white-space: nowrap; }
.line.wcs { gap: 12px; }
.round { width: 16px; height: 16px; border-radius: 50%; background: #d5dce4; }
.round svg { display: block; }
.orient { display: flex; gap: 14px; }
.angles { display: flex; flex-direction: column; align-items: flex-end; width: 30px; }
.lock { align-self: flex-start; width: 22px; height: 22px; margin-top: 1px; }
.lock svg { display: block; }
.cube { width: 64px; height: 72px; margin-top: 19px; }
.cube text { font-size: 9px; font-weight: 600; }

.viewbar {
  display: flex;
  align-self: start;
  height: 17px;
  margin-top: 4px;
  border: 1px solid #8db8da;
  border-radius: 3px;
  background: #fff;
}
.viewbar button { display: flex; align-items: center; justify-content: space-between; width: 30px; padding: 0 4px 0 2px; }
.viewbar .solo { width: 18px; padding-right: 0; }
.viewbar svg { width: 13px; height: 13px; }
.viewbar text { font-size: 6px; }

.right { display: flex; flex-direction: column; justify-content: space-between; align-items: flex-end; padding: 22px 10px 6px 0; color: #111; font-size: 14px; }
.caption { line-height: 24px; text-align: right; }
.scale { display: flex; align-items: center; gap: 7px; line-height: 22px; white-space: nowrap; }
.ruler { width: 42px; height: 15px; border: 1px solid #444; border-top: 0; }
.brand { margin: 0 4px 0 4px; color: #c8310a; font: 900 18px/22px Lato, sans-serif; }
.brand em { color: #f0941a; font-style: normal; font-weight: 400; }

/* status bar */
.status { display: flex; align-items: center; height: 24px; margin-top: 1px; padding: 0 6px 0 4px; background: #e9e7dc; }
.info { width: 12px; height: 12px; }
.cmd { flex: 1; margin-left: 11px; }
.sgroup { display: flex; margin-left: 5px; }
.sgroup button { display: flex; align-items: center; justify-content: center; width: 29px; height: 17px; }
.sgroup svg { width: 13px; height: 13px; }
.box button { border: 1px solid #d2d0c6; border-left-width: 0; }
.box button:first-child { border-left-width: 1px; }
.sel { background: #cbe2f6; }
.sgroup .framed { border: 1px solid #7fb2df; }
.sgroup .drop { width: 11px; background: #fff; }
```
